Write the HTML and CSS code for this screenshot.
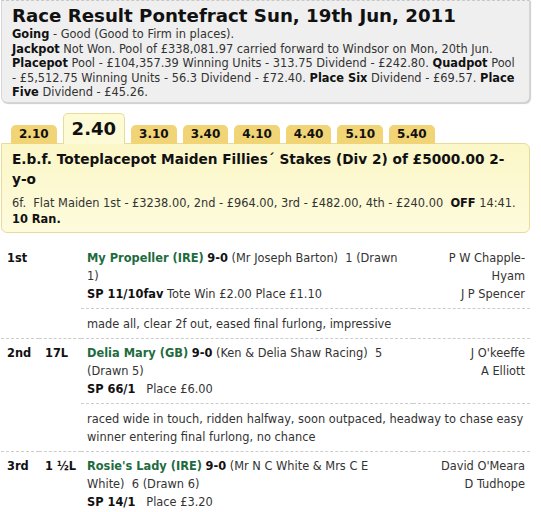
FILE: index.html
```html
<!DOCTYPE html>
<html lang="en">
<head>
    <meta charset="UTF-8">
    <title>Race Result Pontefract Sun, 19th Jun, 2011</title>
    <link rel="stylesheet" href="styles.css">
</head>
<body>
    <div class="summary">
        <h1>Race Result Pontefract Sun, 19th Jun, 2011</h1>
        <p><b>Going</b> - Good (Good to Firm in places).</p>
        <p><b>Jackpot</b> Not Won. Pool of £338,081.97 carried forward to Windsor on Mon, 20th Jun.
        <b>Placepot</b> Pool - £104,357.39 Winning Units - 313.75 Dividend - £242.80. <b>Quadpot</b> Pool
        - £5,512.75 Winning Units - 56.3 Dividend - £72.40. <b>Place Six</b> Dividend - £69.57. <b>Place
        Five</b> Dividend - £45.26.</p>
    </div>

    <ul class="tabs">
        <li><a href="#">2.10</a></li>
        <li class="active"><a href="#">2.40</a></li>
        <li><a href="#">3.10</a></li>
        <li><a href="#">3.40</a></li>
        <li><a href="#">4.10</a></li>
        <li><a href="#">4.40</a></li>
        <li><a href="#">5.10</a></li>
        <li><a href="#">5.40</a></li>
    </ul>

    <div class="race">
        <h2>E.b.f. Toteplacepot Maiden Fillies´ Stakes (Div 2) of £5000.00 2-y-o</h2>
        <p>6f.&nbsp; Flat Maiden 1st - £3238.00, 2nd - £964.00, 3rd - £482.00, 4th - £240.00&nbsp; <b>OFF</b> 14:41.<br>
        <b>10 Ran.</b></p>
    </div>

    <table class="results">
        <tr class="runner">
            <td class="pos" rowspan="2">1st</td>
            <td class="dist" rowspan="2"></td>
            <td class="horse">
                <a href="#">My Propeller (IRE)</a> <b>9-0</b> (Mr Joseph Barton)&nbsp; 1 (Drawn 1)<br>
                <b>SP 11/10fav</b> Tote Win £2.00 Place £1.10
            </td>
            <td class="people">P W Chapple-Hyam<br>J P Spencer</td>
        </tr>
        <tr class="comment">
            <td colspan="2">made all, clear 2f out, eased final furlong, impressive</td>
        </tr>
        <tr class="runner">
            <td class="pos" rowspan="2">2nd</td>
            <td class="dist" rowspan="2">17L</td>
            <td class="horse">
                <a href="#">Delia Mary (GB)</a> <b>9-0</b> (Ken &amp; Delia Shaw Racing)&nbsp; 5 (Drawn 5)<br>
                <b>SP 66/1</b>&nbsp;&nbsp; Place £6.00
            </td>
            <td class="people">J O'keeffe<br>A Elliott</td>
        </tr>
        <tr class="comment">
            <td colspan="2">raced wide in touch, ridden halfway, soon outpaced, headway to chase easy winner entering final furlong, no chance</td>
        </tr>
        <tr class="runner">
            <td class="pos" rowspan="2">3rd</td>
            <td class="dist" rowspan="2">1 ½L</td>
            <td class="horse">
                <a href="#">Rosie's Lady (IRE)</a> <b>9-0</b> (Mr N C White &amp; Mrs C E White)&nbsp; 6 (Drawn 6)<br>
                <b>SP 14/1</b>&nbsp;&nbsp; Place £3.20
            </td>
            <td class="people">David O'Meara<br>D Tudhope</td>
        </tr>
    </table>
</body>
</html>
```

FILE: styles.css
```css
body {
    font-family: "DejaVu Sans", Verdana, sans-serif;
    font-size: 11.4px;
    color: #333;
    margin: 0;
    padding: 0 11px 0 1px;
    background: #fff;
}
b {
    color: #111;
}
.summary {
    background-color: #efefef;
    border: 1px solid #d6d6d6;
    border-top: 1px dashed #c8c8c8;
    border-radius: 0 0 6px 6px;
    box-shadow: 1px 1px 1px #ccc;
    padding: 4px 10px 2px 10px;
}
.summary h1 {
    font-size: 18.2px;
    color: #111;
    margin: 0;
    line-height: 22px;
}
.summary p {
    margin: 0;
    line-height: 14.5px;
}
.tabs {
    list-style: none;
    margin: 10px 0 -1px 0;
    padding: 0 0 0 10px;
    display: flex;
    align-items: flex-end;
    gap: 6px;
    position: relative;
    z-index: 1;
}
.tabs li a {
    display: block;
    background-color: #f1d475;
    color: #111;
    text-decoration: none;
    font-weight: bold;
    font-size: 12px;
    line-height: 19px;
    padding: 0 8px;
    border-radius: 5px 5px 0 0;
}
.tabs li.active a {
    font-size: 18px;
    line-height: 29px;
    background-color: #fdfbd6;
    border: 1px solid #e8dc98;
    border-bottom: none;
    padding: 0 8px 1px 8px;
}
.race {
    background: linear-gradient(#fbf7c8, #fdfbdc);
    border: 1px solid #e8dc98;
    border-radius: 0 6px 6px 6px;
    padding: 5px 10px 5px 10px;
}
.race h2 {
    font-size: 13.7px;
    color: #111;
    margin: 0 0 6px 0;
    line-height: 20px;
}
.race p {
    margin: 0;
    line-height: 16px;
}
.results {
    border-collapse: collapse;
    table-layout: fixed;
    width: 529px;
    margin-top: 11px;
    line-height: 18px;
}
.results td {
    box-sizing: border-box;
    vertical-align: top;
    padding: 5px 10px 5px 6px;
}
.results tr.runner td {
    border-top: 1px dashed #ccc;
}
.results tr.runner:first-child td {
    border-top: none;
}
.results tr.comment td {
    border-top: 1px dashed #ccc;
    padding: 6px 2px 5px 6px;
}
.results .pos {
    width: 38px;
    padding-right: 0;
    font-weight: bold;
    color: #111;
}
.results .dist {
    width: 42px;
    padding-right: 0;
    font-weight: bold;
    color: #111;
}
.results .horse a {
    color: #1e6b40;
    font-weight: bold;
    text-decoration: none;
}
.results .people {
    width: 117px;
    padding-left: 24px;
    padding-right: 5px;
    text-align: right;
}
```
